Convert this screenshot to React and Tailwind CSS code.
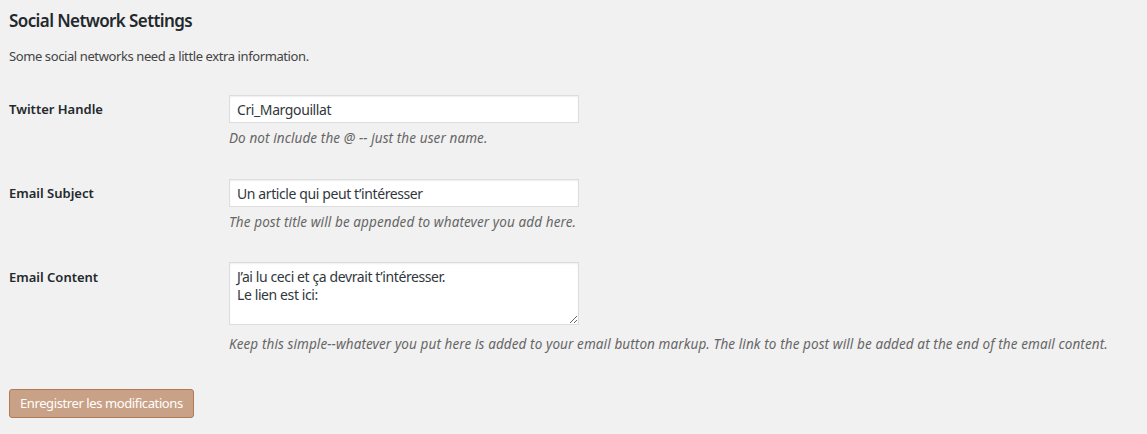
export default function App() {
  const font = { fontFamily: '"Noto Sans", "Open Sans", sans-serif' };
  const inputCls =
    "box-border h-[28px] w-[350px] border border-[#ddd] bg-white px-[7px] text-[14px] tracking-[-0.4px] text-[#32373c] shadow-[inset_0_1px_2px_rgba(0,0,0,0.07)] outline-none";
  const descCls = "leading-[22px] italic text-[13.5px] tracking-[0.1px] text-[#666]";
  return (
    <div className="min-h-[434px] w-full bg-[#f1f1f1] pl-[9px] text-[13px] text-[#23282d]" style={font}>
      <h2 className="pt-[10px] text-[17px] font-semibold leading-[22px] tracking-[-0.6px] text-[#23282d]">Social Network Settings</h2>
      <p className="mt-[15px] leading-[19px] tracking-[-0.4px] text-[#444]">Some social networks need a little extra information.</p>

      <div className="mt-[14px] flex">
        <div className="w-[220px] pt-[20px] font-semibold leading-[18px]">Twitter Handle</div>
        <div className="py-[15px]">
          <input readOnly value="Cri_Margouillat" className={inputCls} style={font} />
          <p className={"mt-[4px] " + descCls}>Do not include the @ -- just the user name.</p>
        </div>
      </div>

      <div className="flex">
        <div className="w-[220px] pt-[20px] font-semibold leading-[18px]">Email Subject</div>
        <div className="py-[15px]">
          <input readOnly value="Un article qui peut t’intéresser" className={inputCls} style={font} />
          <p className={"mt-[4px] " + descCls}>The post title will be appended to whatever you add here.</p>
        </div>
      </div>

      <div className="flex">
        <div className="w-[220px] pt-[20px] font-semibold leading-[18px]">Email Content</div>
        <div className="pt-[14px] pb-[16px]">
          <textarea
            readOnly
            value={"J’ai lu ceci et ça devrait t’intéresser.\nLe lien est ici:"}
            className="box-border block h-[63px] w-[350px] border border-[#ddd] bg-white px-[7px] py-[5px] text-[14px] leading-[18px] tracking-[-0.4px] text-[#32373c] shadow-[inset_0_1px_2px_rgba(0,0,0,0.07)] outline-none"
            style={font}
          />
          <p className={"mt-[8px] " + descCls}>
            Keep this simple--whatever you put here is added to your email button markup. The link to the post will be added at the end of the email content.
          </p>
        </div>
      </div>

      <div className="mt-[18px]">
        <button
          className="box-border h-[29px] rounded-[3px] border border-[#b07a58] bg-[#c9a186] px-[10px] text-[13px] leading-[27px] tracking-[-0.4px] text-[#fff]"
          style={font}
        >
          Enregistrer les modifications
        </button>
      </div>
    </div>
  );
}
